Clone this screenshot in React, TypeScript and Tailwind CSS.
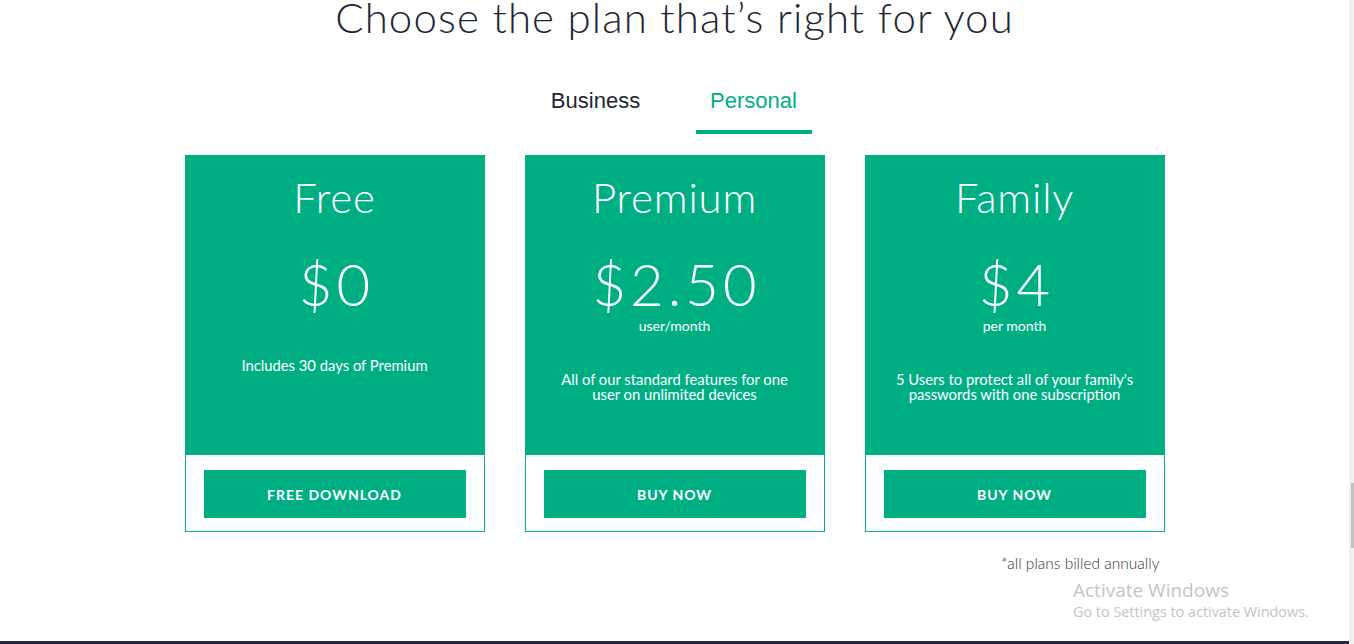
const plans = [
  {
    name: "Free",
    price: "$0",
    sub: "",
    desc: ["Includes 30 days of Premium"],
    cta: "FREE DOWNLOAD",
  },
  {
    name: "Premium",
    price: "$2.50",
    sub: "user/month",
    desc: ["All of our standard features for one", "user on unlimited devices"],
    cta: "BUY NOW",
  },
  {
    name: "Family",
    price: "$4",
    sub: "per month",
    desc: ["5 Users to protect all of your family's", "passwords with one subscription"],
    cta: "BUY NOW",
  },
];

function PlanCard({ plan }: { plan: (typeof plans)[number] }) {
  return (
    <article className="w-[300px] border border-[#00ae84] bg-white">
      <div className="h-[299px] bg-[#00ae84] text-white text-center flex flex-col items-center pt-[16px]">
        <h3 className="text-[42px] leading-[50px] font-light tracking-[0.8px]">{plan.name}</h3>
        <p className="mt-[32px] text-[58px] leading-[60px] font-light tracking-[4px] pl-[4px]">{plan.price}</p>
        {plan.sub && <p className="mt-[4px] text-[14px] leading-[16px]">{plan.sub}</p>}
        <p className={`${plan.sub ? "mt-[38px]" : "mt-[44px]"} text-[14.8px] leading-[15px]`}>
          {plan.desc.map((line) => (
            <span key={line} className="block">
              {line}
            </span>
          ))}
        </p>
      </div>
      <div className="px-[18px] pt-[15px] pb-[13px]">
        <button className="w-full h-[48px] bg-[#00ae84] text-white text-[14px] font-bold tracking-[1px]">
          {plan.cta}
        </button>
      </div>
    </article>
  );
}

export default function App() {
  return (
    <div className="h-[644px] flex overflow-hidden bg-white font-['Lato',sans-serif]">
      <div className="relative flex-1 flex flex-col items-center">
        {/* Heading */}
        <h1 className="text-[42px] leading-[34px] font-light tracking-[1.1px] text-[#1e2634]">
          Choose the plan that’s right for you
        </h1>

        {/* Tabs */}
        <nav className="mt-[54px] flex gap-[42px] font-['Liberation_Sans',Arial,sans-serif] text-[22px] leading-[26px]">
          <button className="w-[116px] pb-[16px] border-b-4 border-transparent text-[#1e2634]">Business</button>
          <button className="w-[116px] pb-[16px] border-b-4 border-[#00ae84] text-[#00ae84]">Personal</button>
        </nav>

        {/* Plans */}
        <section className="mt-[21px] flex gap-[40px]">
          {plans.map((plan) => (
            <PlanCard key={plan.name} plan={plan} />
          ))}
        </section>

        <p className="mt-[23px] w-[980px] pr-[5px] text-right text-[15.5px] leading-[16px] font-light text-[#333]">
          *all plans billed annually
        </p>

        {/* Windows watermark */}
        <div className="absolute left-[1073px] top-[578px] text-[#c4c4c4] font-['Open_Sans',sans-serif] pointer-events-none">
          <p className="text-[19px] leading-[24px]">Activate Windows</p>
          <p className="text-[14.4px] leading-[20px]">Go to Settings to activate Windows.</p>
        </div>

        <div className="mt-auto h-[3px] w-full bg-[#262645]" />
      </div>

      {/* Scrollbar */}
      <div className="w-[5px] bg-[#f0f0f0] flex flex-col items-end pt-[483px]">
        <div className="w-[3px] h-[65px] bg-[#c1c1c1]" />
      </div>
    </div>
  );
}
